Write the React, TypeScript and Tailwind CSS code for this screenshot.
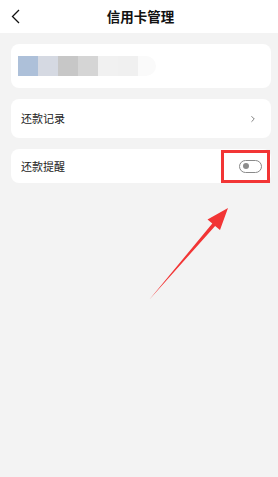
import { ChevronRight } from 'lucide-react';

export default function App() {
  return (
    <div
      className="relative w-[278px] h-[477px] bg-[#f3f3f3] overflow-hidden"
      style={{ fontFamily: '"Noto Sans CJK SC", "Noto Sans", sans-serif' }}
    >
      {/* 顶部导航 */}
      <div className="h-[33px] bg-white flex items-center relative">
        <svg width="24" height="33" viewBox="0 0 24 33" className="ml-[4px]">
          <polyline points="15,10 8.5,16.5 15,23" fill="none" stroke="#111" strokeWidth="1.3" />
        </svg>
        <div className="absolute inset-0 flex items-center justify-center pl-[3px] text-[13.5px] font-bold text-[#111] pointer-events-none">
          信用卡管理
        </div>
      </div>

      <div className="pt-[11px] pl-[11px] pr-[7px] flex flex-col gap-[11px]">
        {/* 卡片（已打码） */}
        <div className="h-[44px] bg-white rounded-[8px] flex items-center pl-[7px] overflow-hidden">
          <div className="flex h-[20px] blur-[0.4px]">
            <div className="w-[20px] bg-[#adc0d9]" />
            <div className="w-[20px] bg-[#d5d9e2]" />
            <div className="w-[20px] bg-[#c7c7c7]" />
            <div className="w-[20px] bg-[#d5d5d5]" />
            <div className="w-[20px] bg-[#f1f1f1]" />
            <div className="w-[20px] bg-[#f0f0f0]" />
            <div className="w-[18px] bg-[#fafafa] rounded-r-full" />
          </div>
        </div>

        {/* 还款记录 */}
        <div className="h-[39px] bg-white rounded-[8px] flex items-center justify-between pl-[10px] pr-[13px]">
          <span className="text-[11px] text-[#222]">还款记录</span>
          <ChevronRight size={10} strokeWidth={2} className="text-[#666]" />
        </div>

        {/* 还款提醒 */}
        <div className="h-[34px] bg-white rounded-[8px] flex items-center justify-between pl-[10px] pr-[9px]">
          <span className="text-[11px] text-[#222]">还款提醒</span>
          <div className="w-[23px] h-[13px] rounded-full border border-[#8a8a8a] flex items-center pl-[3px]">
            <div className="w-[6px] h-[6px] rounded-full bg-[#8c8c8c]" />
          </div>
        </div>
      </div>

      {/* 标注：红框 */}
      <div className="absolute left-[221px] top-[150px] w-[49px] h-[33px] border-[3px] border-[#f23535]" />

      {/* 标注：箭头 */}
      <svg className="absolute left-0 top-0" width="278" height="477" viewBox="0 0 278 477">
        <polygon
          points="149,300 212.3,223.5 207.5,219.5 228,208 220,230 215.1,225.9"
          fill="#f23535"
        />
      </svg>
    </div>
  );
}
